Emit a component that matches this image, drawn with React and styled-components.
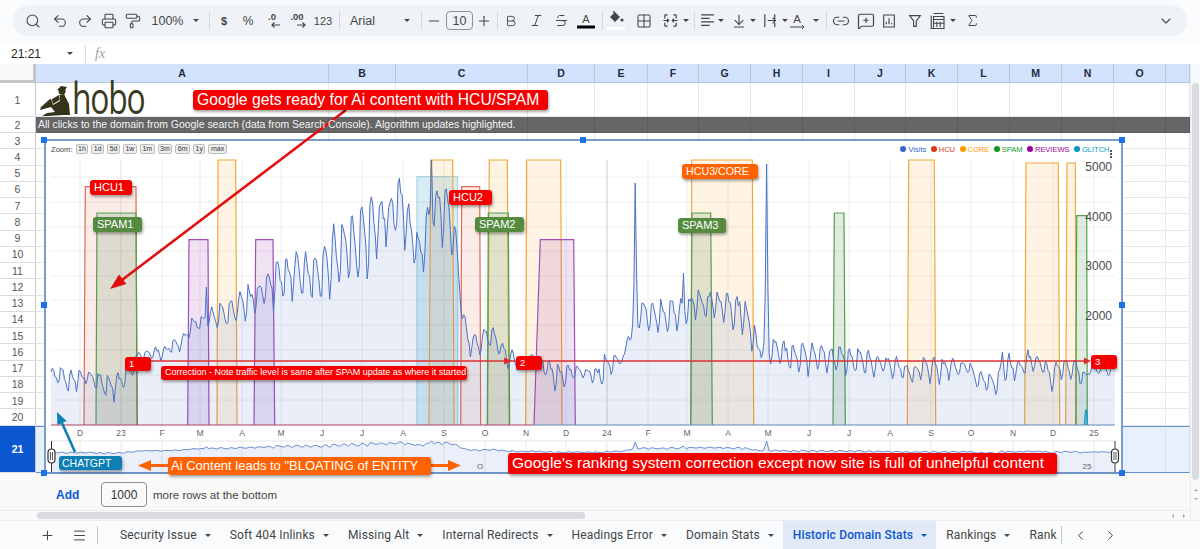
import React from 'react';
import styled, { createGlobalStyle } from 'styled-components';
import { Search, Undo2, Redo2, Printer, PaintRoller, Minus, Plus, Bold, Italic, Strikethrough, Grid2x2, Link2, MessageSquarePlus, Sigma, ChevronDown, ChevronLeft, ChevronRight, Menu, ArrowDownToLine } from 'lucide-react';

const GlobalStyle = createGlobalStyle`
  html, body { margin: 0; padding: 0; background: #fff; }
  * { box-sizing: border-box; }
`;

const Page = styled.div`
  position: relative;
  width: 1200px;
  height: 549px;
  overflow: hidden;
  display: flex;
  flex-direction: column;
  font-family: "Liberation Sans", Arial, sans-serif;
  color: #444746;
`;

/* ---------- toolbar ---------- */
const ToolbarBand = styled.div`
  height: 43px;
  flex: none;
  padding: 5px 13px 0;
  background: #f9fbfd;
`;

const ToolbarPill = styled.div`
  height: 31px;
  border-radius: 16px;
  background: #eff3f8;
  display: flex;
  align-items: center;
`;

const Tool = styled.div`
  flex: none;
  width: ${({ $w }) => $w}px;
  margin-left: ${({ $ml }) => $ml}px;
  display: flex;
  align-items: center;
  justify-content: center;
  font-size: 12.5px;
  color: #444746;
  white-space: nowrap;
`;

const Sep = styled.div`
  width: 1px;
  height: 19px;
  background: #d5d9de;
`;

const Caret = styled.div`
  flex: none;
  width: 0;
  height: 0;
  border-left: 3.5px solid transparent;
  border-right: 3.5px solid transparent;
  border-top: 3.5px solid ${({ $c }) => $c || '#444746'};
`;

const MiniArrow = styled.div`
  width: 0;
  height: 0;
  border: 2.5px solid transparent;
  border-${({ $side }) => $side}-color: #9aa0a6;
`;

const SizeBox = styled.div`
  width: 27px;
  height: 19px;
  border: 1px solid #8e9194;
  border-radius: 4px;
  font-size: 12.5px;
  display: flex;
  align-items: center;
  justify-content: center;
`;

const SmallNum = styled.span`
  font-size: ${({ $fs }) => $fs || 11}px;
  font-weight: ${({ $b }) => ($b ? 700 : 400)};
`;

const I = ({ children, size = 16 }) => (
  <svg width={size} height={size} viewBox="0 0 24 24" fill="none" stroke="#444746" strokeWidth="1.7">{children}</svg>
);

const Dec = ({ label, right }) => (
  <svg width="24" height="20" viewBox="0 0 24 20" fill="none" stroke="#444746">
    <text x="11" y="9" textAnchor="middle" fontSize="9.5" fontWeight="700" fill="#444746" stroke="none" fontFamily="Liberation Sans">{label}</text>
    {right
      ? <path d="M11 14h8M16.5 11.5l2.5 2.5-2.5 2.5" strokeWidth="1.2" />
      : <path d="M11 14h8M13.5 11.5L11 14l2.5 2.5" strokeWidth="1.2" />}
  </svg>
);

const icon = (Cmp, size = 16) => <Cmp size={size} strokeWidth={1.6} color="#444746" />;

const tools = [
  [33, 20, icon(Search)],
  [60, 20, icon(Undo2)],
  [85, 20, icon(Redo2)],
  [109, 20, icon(Printer)],
  [133, 20, icon(PaintRoller)],
  [167.5, 32, '100%'],
  [196, 7, <Caret />],
  [209, 1, <Sep />],
  [224, 12, <SmallNum $b>$</SmallNum>],
  [248, 14, <SmallNum $fs={12}>%</SmallNum>],
  [273, 24, <Dec label=".0" />],
  [298, 24, <Dec label=".00" right />],
  [323, 22, <SmallNum>123</SmallNum>],
  [339, 1, <Sep />],
  [362.5, 24, 'Arial'],
  [407, 7, <Caret />],
  [421, 1, <Sep />],
  [434, 16, icon(Minus)],
  [459.5, 27, <SizeBox>10</SizeBox>],
  [484, 16, icon(Plus)],
  [497, 1, <Sep />],
  [511, 16, icon(Bold, 14)],
  [536, 16, icon(Italic, 15)],
  [561, 16, icon(Strikethrough, 15)],
  [586, 20, (
    <svg width="20" height="20" viewBox="0 0 20 20">
      <text x="10" y="12" textAnchor="middle" fontSize="11" fill="#444746" fontFamily="Liberation Sans">A</text>
      <rect x="1" y="14.5" width="18" height="3" fill="#000" />
    </svg>
  )],
  [602, 1, <Sep />],
  [616, 20, (
    <svg width="20" height="22" viewBox="0 0 20 22" fill="#444746">
      <path d="M8 1l6 6-5 5-5-5 4-4-1.5-1.5z" />
      <circle cx="16" cy="10" r="1.6" />
      <rect x="1" y="17" width="18" height="3" fill="#fff" />
    </svg>
  )],
  [644, 16, icon(Grid2x2)],
  [670, 18, (
    <I size={17}><path d="M4 4h4M16 4h4M4 20h4M16 20h4M4 4v5M20 4v5M4 15v5M20 15v5M2 12h7M15 12h7M7 9.5L9.5 12 7 14.5M17 9.5L14.5 12l2.5 2.5" /></I>
  )],
  [686, 7, <Caret />],
  [694, 1, <Sep />],
  [707, 18, <I size={17}><path d="M3 4h18M3 9h12M3 14h18M3 19h12" /></I>],
  [721, 7, <Caret />],
  [739, 16, icon(ArrowDownToLine)],
  [753, 7, <Caret />],
  [770, 18, <I size={17}><path d="M4 3v18M18 3v7M18 15v6M8 12h11M15 8l4 4-4 4" /></I>],
  [785, 7, <Caret />],
  [798, 18, (
    <svg width="18" height="18" viewBox="0 0 18 18">
      <text x="8" y="11" textAnchor="middle" fontSize="11.5" fill="#444746" fontFamily="Liberation Sans">A</text>
      <path d="M1 15h14M13 13l2 2-2 2" stroke="#444746" fill="none" />
    </svg>
  )],
  [816, 7, <Caret />],
  [826, 1, <Sep />],
  [841, 18, icon(Link2, 18)],
  [866, 18, icon(MessageSquarePlus, 18)],
  [889, 16, <I><path d="M4 3h16v18H4zM8 17v-4M12 17V8M16 17v-2" /></I>],
  [915, 16, <I><path d="M4 4h16l-6 8v8h-4v-8z" /></I>],
  [938, 18, <I size={18}><path d="M6 2h13M3 5v17h17V6H6v15M6 10h14M10.5 13v7M15 13v7M6 15h14" strokeWidth="1.5" /></I>],
  [953, 7, <Caret />],
  [972, 15, icon(Sigma, 15)],
  [1166, 16, icon(ChevronDown)],
];

const placedTools = (() => {
  let edge = 13;
  return tools.map(([c, w, el]) => {
    const left = c - w / 2;
    const ml = left - edge;
    edge = left + w;
    return { w, ml, el };
  });
})();

/* ---------- formula bar ---------- */
const FormulaBar = styled.div`
  height: 21px;
  flex: none;
  display: flex;
  align-items: center;
  padding-left: 11px;
  background: #fff;
  font-size: 12px;
`;

const CellRef = styled.div`
  width: 56px;
  color: #1f1f1f;
`;

const FormulaDivider = styled.div`
  width: 1px;
  height: 18px;
  background: #dadce0;
  margin: 0 9px 0 12px;
`;

const Fx = styled.span`
  font-family: "Liberation Serif", serif;
  font-style: italic;
  font-size: 14px;
  color: #9aa0a6;
`;

/* ---------- sheet ---------- */
const Body = styled.div`
  height: 456px;
  flex: none;
  display: flex;
`;

const SheetColumn = styled.div`
  width: 1190px;
  display: flex;
  flex-direction: column;
`;

const columns = ['A', 'B', 'C', 'D', 'E', 'F', 'G', 'H', 'I', 'J', 'K', 'L', 'M', 'N', 'O', ''];

const Grid = styled.div`
  height: 409px;
  flex: none;
  display: grid;
  grid-template-columns: 36px 293px 67px 132px 67px 53px 51px 52px 52px 52px 51px 52px 52px 52px 52px 52px 24px;
  grid-template-rows: 19px 34px 16px repeat(18, 16.25px) 47.5px;
  background: #fff;
`;

const Corner = styled.div`
  background: #f8f9fa;
  border-right: 3px solid #c4c7c5;
  border-bottom: 3px solid #c4c7c5;
`;

const ColHead = styled.div`
  background: #d3e3fd;
  border-right: 1px solid #b4c6e4;
  border-bottom: 1px solid #b4c6e4;
  display: flex;
  align-items: center;
  justify-content: center;
  font-size: 10.5px;
  font-weight: 700;
  color: #1f2a44;
`;

const RowHead = styled.div`
  background: ${({ $active }) => ($active ? '#0b57d0' : '#fff')};
  color: ${({ $active }) => ($active ? '#fff' : '#555')};
  font-weight: ${({ $active }) => ($active ? 700 : 400)};
  border-right: 1px solid #c7c7c7;
  border-bottom: 1px solid #dadce0;
  display: flex;
  align-items: center;
  justify-content: center;
  font-size: 10.5px;
`;

const Cell = styled.div`
  min-width: 0;
  border-right: 1px solid ${({ $dark }) => ($dark ? '#5c5c5c' : '#e6e8ea')};
  border-bottom: 1px solid ${({ $dark }) => ($dark ? '#5c5c5c' : '#e6e8ea')};
  background: ${({ $dark, $active }) => ($dark ? '#666' : $active ? '#e8f0fe' : '#fff')};
  ${({ $active }) => $active && 'border-top: 1px solid #5f8fd0; border-bottom: 1px solid #5f8fd0; border-right-color: #d3dff2;'}
`;

const BannerText = styled.span`
  display: block;
  position: relative;
  z-index: 1;
  padding: 1px 0 0 2px;
  font-size: 10.45px;
  line-height: 14px;
  white-space: nowrap;
  color: #f2f2f2;
`;

const LogoCell = styled.div`
  display: flex;
  align-items: flex-end;
  height: 100%;
  padding-left: 3px;
`;

const LogoWord = styled.span`
  font-family: "Open Sans", sans-serif;
  font-weight: 400;
  font-size: 43px;
  line-height: 34px;
  height: 34px;
  letter-spacing: -1.6px;
  color: #3b3a1e;
  transform: scaleX(0.74);
  transform-origin: left center;
  position: relative;
  top: -1px;
`;

const VScroll = styled.div`
  width: 10px;
  background: #f8f9fa;
  border-left: 1px solid #e8eaed;
  display: flex;
  flex-direction: column;
  align-items: center;
  padding-top: 19px;
`;

const VThumb = styled.div`
  width: 7px;
  height: 397px;
  border-radius: 4px;
  background: #d9dbe0;
  margin-bottom: 7px;
`;

const VArrows = styled.div`
  display: flex;
  flex-direction: column;
  align-items: center;
  gap: 7px;
`;

/* ---------- add rows ---------- */
const AddRow = styled.div`
  height: 37px;
  flex: none;
  display: flex;
  align-items: center;
  padding: 6px 0 0 56px;
  background: #f8f9f8;
  font-size: 11.5px;
`;

const AddLabel = styled.span`
  color: #0b57d0;
  font-size: 12px;
  font-weight: 700;
  width: 45px;
`;

const AddInput = styled.div`
  width: 46px;
  height: 25px;
  border: 1px solid #8e9194;
  border-radius: 4px;
  display: flex;
  align-items: center;
  justify-content: center;
  font-size: 12px;
  color: #333;
  margin-right: 6px;
`;

const HScroll = styled.div`
  height: 10px;
  flex: none;
  display: flex;
  align-items: center;
  justify-content: space-between;
  padding: 0 3px 0 37px;
  background: #f8f9f8;
  border-top: 1px solid #eceeef;
`;

const HThumb = styled.div`
  width: 548px;
  height: 7px;
  border-radius: 4px;
  background: #d9dbe0;
`;

const HArrows = styled.div`
  display: flex;
  gap: 9px;
`;

/* ---------- tabs ---------- */
const TabBar = styled.div`
  height: 29px;
  flex: none;
  display: flex;
  align-items: center;
  background: #f9fbfd;
  border-top: 1px solid #eceeef;
  padding-left: 39px;
  font-family: Roboto, sans-serif;
`;

const TabIcon = styled.div`
  flex: none;
  width: ${({ $w }) => $w || 16}px;
  margin-right: ${({ $mr }) => $mr || 0}px;
  display: flex;
  justify-content: center;
`;

const TabDivider = styled.div`
  flex: none;
  width: 1px;
  height: 18px;
  background: #c4c7c5;
  margin: ${({ $m }) => $m || '0'};
`;

const TabStrip = styled.div`
  flex: none;
  width: 951px;
  height: 100%;
  margin-left: 12px;
  display: flex;
  overflow: hidden;
`;

const Tab = styled.div`
  flex: none;
  display: flex;
  align-items: center;
  gap: 8px;
  padding: 0 9px 0 10px;
  font-size: 12px;
  letter-spacing: 0.15px;
  white-space: nowrap;
  font-weight: ${({ $active }) => ($active ? 500 : 400)};
  color: ${({ $active }) => ($active ? '#0b57d0' : '#444746')};
  background: ${({ $active }) => ($active ? '#e1e9f7' : 'transparent')};
`;

const tabs = ['Security Issue', 'Soft 404 Inlinks', 'Missing Alt', 'Internal Redirects', 'Headings Error', 'Domain Stats', 'Historic Domain Stats', 'Rankings', 'Rank'];

/* ---------- chart ---------- */
const Chart = styled.div`
  position: absolute;
  left: 44px;
  top: 139px;
  width: 1079px;
  height: 335px;
  border: 2px solid #7b9ec9;
  border-bottom-color: #6d93c7;
  background: #fff;
  display: flex;
  flex-direction: column;
`;

const ChartHead = styled.div`
  height: 19px;
  flex: none;
  display: flex;
  align-items: center;
  justify-content: space-between;
  padding: 0 9px 3px 5px;
`;

const ZoomRow = styled.div`
  display: flex;
  align-items: center;
  gap: 3px;
  font-size: 7.6px;
  color: #444;
`;

const ZoomBtn = styled.div`
  height: 10px;
  padding: 0 1.5px;
  border: 1px solid #bdbdbd;
  border-radius: 2px;
  background: #eee;
  font-size: 7px;
  line-height: 8px;
  color: #333;
`;

const Legend = styled.div`
  display: flex;
  align-items: center;
  gap: 4.5px;
  font-size: 7.5px;
`;

const LegendItem = styled.div`
  display: flex;
  align-items: center;
  gap: 2px;
  color: ${({ $c }) => $c};
`;

const Dot = styled.span`
  width: 6px;
  height: 6px;
  border-radius: 50%;
  background: ${({ $c }) => $c};
`;

const Kebab = styled.div`
  display: flex;
  flex-direction: column;
  gap: 1px;
  margin: 5px 0 -5px -4px;
`;

const KebabDot = styled.span`
  width: 2px;
  height: 2px;
  background: #555;
`;

const Handle = styled.div`
  position: absolute;
  left: ${({ $x }) => $x - 3}px;
  top: ${({ $y }) => $y - 3}px;
  width: 6px;
  height: 6px;
  background: #1a73e8;
`;

const Callout = styled.div`
  position: absolute;
  left: ${({ $x }) => $x}px;
  top: ${({ $y }) => $y}px;
  width: ${({ $w }) => $w}px;
  height: ${({ $h }) => $h}px;
  padding-left: ${({ $pl }) => $pl || 4}px;
  background: ${({ $bg }) => $bg};
  border-radius: 3px;
  box-shadow: 1px 2px 3px rgba(0, 0, 0, 0.35);
  color: #fff;
  font-size: ${({ $fs }) => $fs}px;
  line-height: ${({ $h }) => $h}px;
  white-space: nowrap;
  overflow: hidden;
`;

const OverlayArt = styled.svg`
  position: absolute;
  left: 0;
  top: 0;
  pointer-events: none;
`;

const CORE = ['#f2a83b', 'rgba(255,153,0,.11)'];
const SPAM = ['#4fa14f', 'rgba(40,120,40,.14)'];
const HCU = ['#e0694f', 'rgba(220,70,30,.1)'];
const REV = ['#a24fb5', 'rgba(140,30,160,.13)'];
const BASE = 425;

const bands = [
  [...HCU, 84, 85.3, 136, 137, 186.7],
  [...SPAM, 96, 97, 136, 137.3, 213],
  [...REV, 187.7, 189, 208, 209, 239.7],
  [...CORE, 217, 218, 235.7, 237, 160],
  [...REV, 254, 255.7, 273, 274.7, 239.7],
  ['#a9d3e4', 'rgba(60,160,200,.2)', 417, 417, 457.7, 457.7, 176.7],
  [...CORE, 429, 430.7, 452.7, 454, 160],
  [...HCU, 460.7, 461.7, 479.7, 480.7, 186.7],
  [...CORE, 487.7, 489.3, 507.3, 509, 160],
  [...SPAM, 487.3, 488.3, 508.3, 509.7, 213],
  [...CORE, 525.7, 526.7, 560.7, 562, 160],
  [...REV, 534, 540.3, 573.7, 575.3, 239.7],
  [...CORE, 691, 691.7, 752.3, 753.7, 160],
  [...SPAM, 690.7, 692, 710.7, 712.3, 213],
  [...SPAM, 833, 834.3, 844, 845.3, 213],
  [...CORE, 907.3, 908.7, 934.3, 935.7, 160],
  [...CORE, 1024.7, 1026, 1058.3, 1059.7, 163],
  [...CORE, 1065.7, 1067, 1075.3, 1076.3, 163],
  [...SPAM, 1075.7, 1076.7, 1086.7, 1087.3, 215.7],
  ['#1ba3c6', 'rgba(0,153,198,.5)', 1084.3, 1085.5, 1086.5, 1087.7, 410],
];

const envelope = [
  [51, 368, 385], [70, 368, 396], [85, 372, 385], [100, 372, 395], [110, 372, 405], [125, 368, 392],
  [140, 350, 362], [160, 348, 360], [180, 336, 352], [187, 330, 345], [190, 318, 335], [205, 312, 330],
  [225, 302, 330], [245, 285, 325], [262, 282, 310], [272, 262, 315], [285, 262, 300], [300, 252, 300],
  [320, 248, 312], [335, 232, 305], [345, 212, 280], [360, 212, 288], [375, 195, 260], [390, 190, 250],
  [403, 180, 250], [412, 225, 265], [420, 240, 285], [428, 205, 262], [440, 182, 238], [452, 182, 268],
  [457, 247, 265], [461, 300, 315], [468, 332, 355], [480, 334, 360], [490, 322, 350], [500, 340, 362],
  [510, 350, 370], [520, 355, 375], [535, 352, 370], [550, 362, 385], [555, 365, 395], [575, 365, 378],
  [590, 370, 376], [597, 368, 397], [605, 353, 385], [625, 353, 362], [628, 327, 345], [633, 325, 347],
  [640, 302, 330], [655, 300, 335], [665, 298, 345], [680, 300, 330], [700, 290, 320], [720, 290, 325],
  [740, 295, 330], [752, 310, 355], [757, 340, 360], [775, 340, 365], [790, 345, 372], [800, 347, 375],
  [820, 345, 375], [840, 348, 375], [860, 348, 378], [880, 355, 378], [900, 358, 380], [912, 365, 387],
  [925, 358, 378], [935, 358, 385], [950, 360, 380], [970, 362, 375], [975, 370, 385], [990, 375, 395],
  [997, 380, 397], [1003, 352, 385], [1020, 362, 378], [1028, 352, 375], [1040, 355, 370], [1050, 365, 395],
  [1060, 360, 380], [1075, 360, 378], [1085, 370, 395], [1090, 365, 375], [1115, 365, 378],
];

const spikes = [[207, 287], [431, 160], [635, 183], [684, 273], [767, 164], [1002, 352]];

const series = (() => {
  const week = [0.95, 1, 0.85, 0.7, 0.4, 0.03, 0.25];
  let seed = 17;
  const rand = () => {
    seed = (seed * 16807) % 2147483647;
    return seed / 2147483647;
  };
  const pts = [];
  let seg = 0;
  let amp = 1;
  for (let x = 51; x <= 1115; x += 1.34) {
    while (seg < envelope.length - 2 && envelope[seg + 1][0] < x) seg += 1;
    const [x0, t0, b0] = envelope[seg];
    const [x1, t1, b1] = envelope[seg + 1];
    const k = (x - x0) / (x1 - x0);
    const top = t0 + (t1 - t0) * k;
    const bot = b0 + (b1 - b0) * k;
    if (pts.length % 7 === 0) amp = 0.7 + rand() * 0.3;
    const p = 1 - (1 - week[pts.length % 7]) * amp + (rand() - 0.5) * 0.3 - (1 - amp) * 0.4;
    pts.push([x, top + (bot - top) * (1 - p)]);
  }
  spikes.forEach(([sx, sy]) => {
    const i = Math.round((sx - 51) / 1.34);
    pts[i] = [pts[i][0], sy];
    if (sy < 200) {
      pts[i - 1][1] = (pts[i - 1][1] * 3 + sy) / 4;
      pts[i + 1][1] = (pts[i + 1][1] * 2 + sy) / 3;
    }
  });
  return pts;
})();

const toPath = (pts) => pts.map(([x, y], i) => `${i ? 'L' : 'M'}${x.toFixed(1)} ${y.toFixed(1)}`).join('');

const miniSeries = series
  .filter((_, i) => i % 2 === 0)
  .map(([x, y]) => [x, 459 - 18 * Math.pow(Math.max(0, BASE - y) / 265, 0.6)]);

const months = [
  [80, 'D'], [121, '23'], [162, 'F'], [200, 'M'], [242, 'A'], [281, 'M'], [322, 'J'], [362, 'J'], [403, 'A'],
  [444, 'S'], [485, 'O'], [526, 'N'], [566, 'D'], [607, '24'], [648, 'F'], [687, 'M'], [728, 'A'], [768, 'M'],
  [809, 'J'], [849, 'J'], [890, 'A'], [931, 'S'], [971, 'O'], [1013, 'N'], [1053, 'D'], [1094, '25'],
];

const hLines = [177, 202, 227, 251, 276, 300, 325, 350, 375, 400];
const yLabels = [[5000, 171], [4000, 221], [3000, 270], [2000, 320]];

const legend = [
  ['Visits', '#3366cc'], ['HCU', '#dc3912'], ['CORE', '#ff9900'], ['SPAM', '#109618'], ['REVIEWS', '#990099'], ['GLITCH', '#0099c6'],
];

const PlotSvg = () => (
  <svg width="1075" height="312" viewBox="46 160 1075 312" style={{ overflow: 'visible', display: 'block' }}>
    {hLines.map((y) => <line key={y} x1="51" x2="1115" y1={y} y2={y} stroke="#f0f0f0" />)}
    {months.map(([x, label]) => (
      <line key={x} x1={x} x2={x} y1="160" y2={BASE} stroke={label === '24' ? '#dedede' : label === '23' ? '#e2e2e2' : '#ececec'} strokeWidth={label === '24' ? 1.5 : 1} />
    ))}
    {bands.map(([stroke, fill, bl, tl, tr, br, top], i) => (
      <path key={i} d={`M${bl} ${BASE}L${tl} ${top}L${tr} ${top}L${br} ${BASE}`} fill={fill} stroke={stroke} strokeWidth="1.2" />
    ))}
    <path d={`${toPath(series)}L1115 ${BASE}L51 ${BASE}Z`} fill="rgba(51,102,204,.11)" />
    <path d={toPath(series)} fill="none" stroke="#4a72c4" strokeWidth="1" />
    <line x1="51" x2="533" y1={BASE} y2={BASE} stroke="#b0405f" strokeWidth="1.2" />
    <line x1="533" x2="1115" y1={BASE} y2={BASE} stroke="#5f86bd" strokeWidth="1.2" />
    {yLabels.map(([v, y]) => (
      <text key={v} x="1112" y={y} textAnchor="end" fontSize="12" fill="#4a4a4a" fontFamily="Liberation Sans">{v}</text>
    ))}
    {months.map(([x, label]) => (
      <g key={label + x} fontFamily="Liberation Sans" fill="#666" textAnchor="middle">
        <text x={x} y="436" fontSize="8.5">{label}</text>
        <line x1={x} x2={x} y1="441" y2="472" stroke="#e9e9e9" />
      </g>
    ))}
    <line x1="51" x2="1115" y1="441" y2="441" stroke="#e4e4e4" />
    <path d={`${toPath(miniSeries)}L1113 472L51 472Z`} fill="rgba(51,102,204,.1)" />
    <path d={toPath(miniSeries)} fill="none" stroke="#5b80c9" strokeWidth="0.9" />
    <text x="480" y="469" fontSize="8" fill="#666" textAnchor="middle" fontFamily="Liberation Sans">O</text>
    <text x="1087" y="469" fontSize="8" fill="#666" textAnchor="middle" fontFamily="Liberation Sans">25</text>
    {[51.5, 1115].map((x) => (
      <g key={x} stroke="#333" fill="#fff">
        <line x1={x} x2={x} y1="441" y2="472" />
        <rect x={x - 3.5} y="449" width="7" height="14" rx="3.5" strokeWidth="1.2" />
        <line x1={x - 1} x2={x - 1} y1="452" y2="460" strokeWidth="0.8" />
        <line x1={x + 1} x2={x + 1} y1="452" y2="460" strokeWidth="0.8" />
      </g>
    ))}
  </svg>
);

const HoboMark = () => (
  <svg width="33" height="31" viewBox="0 0 33 31" fill="#35341b" style={{ flex: 'none' }}>
    <circle cx="23" cy="6" r="3.6" />
    <path d="M18 5l4-4 6 1-2 3-4 0z" />
    <path d="M20 10l5-1 5 10 1 11h-7L9 31H3l5-3 8-1-4-5-11 3 1-3 9-8 5 1 5-3z" />
    <path d="M12 13l8-4 1 7-7 4z" fill="#fff" />
    <path d="M13 14l7-4 .6 5-6.6 4z" />
  </svg>
);

const callouts = [
  { x: 193, y: 90, w: 355, h: 20, bg: '#f40000', fs: 15.7, t: 'Google gets ready for Ai content with HCU/SPAM' },
  { x: 90, y: 180, w: 42, h: 14.5, bg: '#f40000', fs: 11, t: 'HCU1' },
  { x: 93, y: 217, w: 49, h: 15, bg: '#548b3f', fs: 11, t: 'SPAM1' },
  { x: 125, y: 357, w: 26, h: 13.5, bg: '#f40000', fs: 9.5, t: '1' },
  { x: 161, y: 366, w: 306, h: 13.5, bg: '#f40000', fs: 9, t: 'Correction - Note traffic level is same after SPAM update as where it started' },
  { x: 449, y: 190, w: 43, h: 15, bg: '#f40000', fs: 11, t: 'HCU2' },
  { x: 475, y: 217, w: 49, h: 15, bg: '#548b3f', fs: 11, t: 'SPAM2' },
  { x: 516, y: 356, w: 26, h: 13.5, bg: '#f40000', fs: 9.5, t: '2' },
  { x: 682, y: 163.5, w: 76, h: 15, bg: '#ff6200', fs: 10.7, t: 'HCU3/CORE' },
  { x: 678, y: 218, w: 48, h: 15, bg: '#548b3f', fs: 11, t: 'SPAM3' },
  { x: 1091, y: 355, w: 26, h: 14, bg: '#f40000', fs: 9.5, t: '3' },
  { x: 59, y: 456, w: 63, h: 14, bg: '#0d7fb4', fs: 10.5, t: 'CHATGPT', pl: 3 },
  { x: 168, y: 457, w: 263, h: 18, bg: '#ff6200', fs: 13, t: 'Ai Content leads to "BLOATING of ENTITY', pl: 3 },
  { x: 508, y: 453, w: 549, h: 20.5, bg: '#f40000', fs: 15.5, t: "Google's ranking system correction except now site is full of unhelpful content" },
];

const handles = [[44, 140], [583, 140], [1122, 140], [44, 305], [1122, 305], [44, 473], [1122, 473]];

export default function App() {
  return (
    <Page>
      <GlobalStyle />
      <ToolbarBand>
        <ToolbarPill>
          {placedTools.map(({ w, ml, el }, i) => <Tool key={i} $w={w} $ml={ml}>{el}</Tool>)}
        </ToolbarPill>
      </ToolbarBand>

      <FormulaBar>
        <CellRef>21:21</CellRef>
        <Caret />
        <FormulaDivider />
        <Fx>fx</Fx>
      </FormulaBar>

      <Body>
        <SheetColumn>
          <Grid>
            <Corner />
            {columns.map((c, i) => <ColHead key={i}>{c}</ColHead>)}
            {Array.from({ length: 21 }, (_, r) => (
              <React.Fragment key={r}>
                <RowHead $active={r === 20}>{r + 1}</RowHead>
                {columns.map((c, i) => (
                  <Cell key={i} $dark={r === 1} $active={r === 20}>
                    {r === 0 && i === 0 && (
                      <LogoCell>
                        <HoboMark />
                        <LogoWord>hobo</LogoWord>
                      </LogoCell>
                    )}
                    {r === 1 && i === 0 && (
                      <BannerText>All clicks to the domain from Google search (data from Search Console). Algorithm updates highlighted.</BannerText>
                    )}
                  </Cell>
                ))}
              </React.Fragment>
            ))}
          </Grid>
          <AddRow>
            <AddLabel>Add</AddLabel>
            <AddInput>1000</AddInput>
            more rows at the bottom
          </AddRow>
          <HScroll>
            <HThumb />
            <HArrows><MiniArrow $side="right" /><MiniArrow $side="left" /></HArrows>
          </HScroll>
        </SheetColumn>
        <VScroll>
          <VThumb />
          <VArrows><MiniArrow $side="bottom" /><MiniArrow $side="top" /></VArrows>
        </VScroll>
      </Body>

      <TabBar>
        <TabIcon $mr={16}><Plus size={15} strokeWidth={1.6} color="#444746" /></TabIcon>
        <TabIcon $mr={10}><Menu size={15} strokeWidth={1.6} color="#444746" /></TabIcon>
        <TabDivider />
        <TabStrip>
          {tabs.map((t, i) => (
            <Tab key={t} $active={i === 6}>
              {t}
              {i < 8 && <Caret $c={i === 6 ? '#0b57d0' : '#444746'} />}
            </Tab>
          ))}
        </TabStrip>
        <TabDivider $m="0 10px 0 0" />
        <TabIcon $mr={14}><ChevronLeft size={15} strokeWidth={1.6} color="#444746" /></TabIcon>
        <TabIcon><ChevronRight size={15} strokeWidth={1.6} color="#444746" /></TabIcon>
      </TabBar>

      <Chart>
        <ChartHead>
          <ZoomRow>
            Zoom:
            {['1h', '1d', '5d', '1w', '1m', '3m', '6m', '1y', 'max'].map((z) => <ZoomBtn key={z}>{z}</ZoomBtn>)}
          </ZoomRow>
          <Legend>
            {legend.map(([name, c]) => (
              <LegendItem key={name} $c={c}><Dot $c={c} />{name}</LegendItem>
            ))}
            <Kebab><KebabDot /><KebabDot /><KebabDot /></Kebab>
          </Legend>
        </ChartHead>
        <PlotSvg />
      </Chart>

      {handles.map(([x, y]) => <Handle key={`${x}-${y}`} $x={x} $y={y} />)}

      <OverlayArt width="1200" height="549" viewBox="0 0 1200 549">
        <line x1="346" y1="110" x2="122" y2="280" stroke="#e01010" strokeWidth="2.6" />
        <polygon points="110,289 126.4,284.1 119.1,274.5" fill="#e01010" />
        <line x1="75" y1="452" x2="62" y2="423" stroke="#0d7fb4" strokeWidth="2.6" />
        <polygon points="57,412 66.5,420.9 57.4,425" fill="#0d7fb4" />
        <line x1="150" y1="361" x2="1085" y2="361" stroke="#dd3030" strokeWidth="1.5" />
        <polygon points="512,361 504,357.5 504,364.5" fill="#dd3030" />
        <polygon points="1091,361 1084,357.5 1084,364.5" fill="#dd3030" />
        <line x1="148" y1="465.5" x2="170" y2="465.5" stroke="#ff6200" strokeWidth="3" />
        <polygon points="138,465.5 151,460 151,471" fill="#ff6200" />
        <line x1="430" y1="465.5" x2="452" y2="465.5" stroke="#ff6200" strokeWidth="3" />
        <polygon points="461,465.5 448,460 448,471" fill="#ff6200" />
      </OverlayArt>

      {callouts.map((c) => (
        <Callout key={c.t} $x={c.x} $y={c.y} $w={c.w} $h={c.h} $bg={c.bg} $fs={c.fs} $pl={c.pl}>{c.t}</Callout>
      ))}
    </Page>
  );
}
